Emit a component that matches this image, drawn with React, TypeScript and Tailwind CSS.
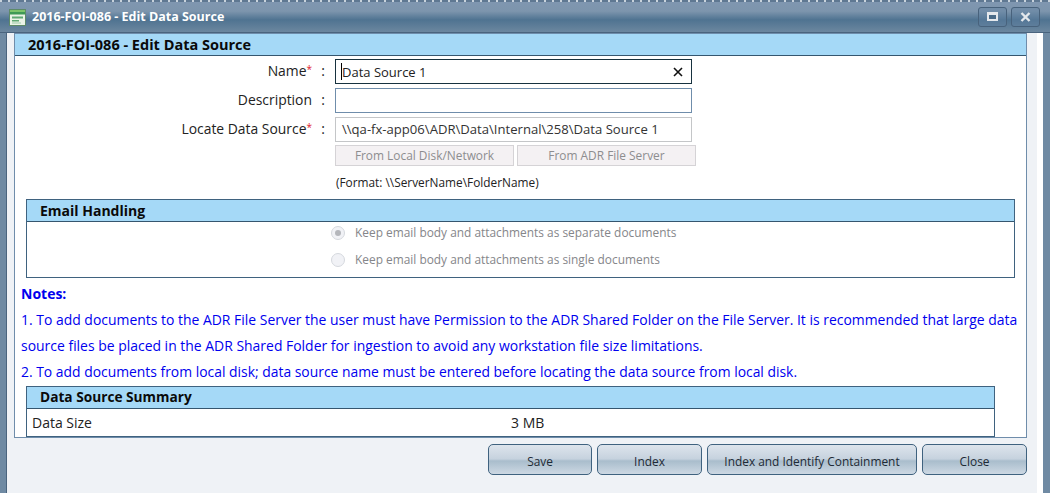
import * as React from 'react';

const font = { fontFamily: '"Open Sans", "Noto Sans", sans-serif' };

const sectionHeader = 'h-[22px] bg-[#a5d9f7] border-b border-[#35566f] pl-[13px] flex items-center font-bold text-[#0a0a0a]';

const footerButtons = [
    { name: 'Save', width: 'w-[104px]' },
    { name: 'Index', width: 'w-[105px]' },
    { name: 'Index and Identify Containment', width: 'w-[210px]' },
    { name: 'Close', width: 'w-[105px]' },
];

const WindowIcon = () => (
    <svg width="17" height="17" viewBox="0 0 17 17" className="shrink-0">
        <rect x="0.5" y="0.5" width="16" height="16" fill="#eaf3e6" stroke="#5d8a68" />
        <rect x="1" y="1" width="15" height="2" fill="#7cc46a" />
        <rect x="1" y="3" width="15" height="2.5" fill="#3f9a55" />
        <rect x="3" y="7.5" width="11" height="2" fill="#5fa873" />
        <rect x="3" y="11" width="7" height="1.5" fill="#5fa873" />
        <rect x="3" y="13.5" width="9" height="1" fill="#9cc9a8" />
    </svg>
);

const FormRow = ({ label, required, children }: { label: string; required?: boolean; children: React.ReactNode }) => (
    <div className="flex items-start">
        <div className="w-[297px] flex justify-end text-[13.9px] leading-[24px] text-[#222]">
            {label}
            {required ? <span className="text-[#e0202a] text-[10px] leading-[20px]">*</span> : null}
        </div>
        <div className="w-[13px] text-right text-[14px] leading-[24px] text-[#222]">:</div>
        <div className="ml-[10px]">{children}</div>
    </div>
);

const Radio = ({ checked, label }: { checked?: boolean; label: string }) => (
    <div className="flex items-center h-[28px] pb-[6px] pl-[304px]">
        <span className="w-[14px] h-[14px] rounded-full border border-[#d5d8de] bg-[#f1f2f6] flex items-center justify-center">
            {checked ? <span className="w-[6px] h-[6px] rounded-full bg-[#b4b6bb]" /> : null}
        </span>
        <span className="ml-[10px] text-[11.9px] text-[#85868a]">{label}</span>
    </div>
);

export default function App() {
    return (
        <div style={font} className="w-[1050px] h-[493px] overflow-hidden flex flex-col bg-[#6f8aa3]">
            <div className="h-[33px] shrink-0 flex flex-col bg-[linear-gradient(#8097b1,#7d95ad_35%,#4f7391_62%,#6c879f)] border-b border-[#4a647e]">
                <div className="h-[2px] bg-[repeating-linear-gradient(90deg,#c9d3dc_0,#c9d3dc_2px,#5f7892_2px,#5f7892_8px)]" />
                <div className="flex-1 flex items-center pl-[9px] pr-[10px]">
                    <WindowIcon />
                    <span className="ml-[6px] text-[12.5px] font-bold text-white">2016-FOI-086 - Edit Data Source</span>
                    <div className="ml-auto flex gap-[4px] -mt-[1px]">
                        <div className="w-[29px] h-[20px] rounded-[3px] border border-[#48627c] bg-[#5f80a0]/40 flex items-center justify-center">
                            <span className="w-[11px] h-[9px] border-[2px] border-t-[3px] border-[#e4e8ec] bg-[#4a6b88]" />
                        </div>
                        <div className="w-[29px] h-[20px] rounded-[3px] border border-[#48627c] bg-[#5f80a0]/40 flex items-center justify-center text-[#e4e8ec]">
                            <svg width="11" height="10" viewBox="0 0 11 10">
                                <path d="M1.5 1 L9.5 9 M9.5 1 L1.5 9" stroke="currentColor" strokeWidth="2.4" />
                            </svg>
                        </div>
                    </div>
                </div>
            </div>

            <div className="flex-1 flex pl-[6px] pr-[7px] min-h-0">
                <div className="flex-1 bg-[#eff2f6] border-l border-[#4a647e] pl-[7px] pr-[10px] flex flex-col border-r-[6px] border-r-white">
                    <div className="h-[405px] border border-[#6f8dab] bg-white flex flex-col">
                        <div className={`${sectionHeader} text-[14.5px]`}>2016-FOI-086 - Edit Data Source</div>

                        <div className="pt-[3px] flex flex-col gap-[4px]">
                            <FormRow label="Name" required>
                                <div className="w-[357px] h-[25px] border border-[#17323f] flex items-center pl-[5px] pr-[9px] pt-[2px] text-[13px] text-[#222]">
                                    <span className="w-px h-[17px] bg-black -mt-[2px]" />
                                    <span>Data Source 1</span>
                                    <svg width="10" height="10" viewBox="0 0 10 10" className="ml-auto -mt-[2px] -mr-[1px]">
                                        <path d="M1 1 L9 9 M9 1 L1 9" stroke="#111" strokeWidth="1.6" />
                                    </svg>
                                </div>
                            </FormRow>
                            <FormRow label="Description">
                                <div className="w-[357px] h-[25px] border border-[#6f8dab]" />
                            </FormRow>
                            <FormRow label="Locate Data Source" required>
                                <div className="w-[357px] h-[25px] border border-[#c4c6c8] flex items-center pl-[6px] text-[13.1px] text-[#333]">
                                    \\qa-fx-app06\ADR\Data\Internal\258\Data Source 1
                                </div>
                            </FormRow>
                        </div>
                        <div className="pl-[320px] pt-[3px] flex gap-[3px]">
                            <div className="w-[179px] h-[21px] border border-[#d5d3d6] bg-[#f4f1f3] flex items-center justify-center text-[11.9px] text-[#8d8d8f]">From Local Disk/Network</div>
                            <div className="w-[179px] h-[21px] border border-[#d5d3d6] bg-[#f4f1f3] flex items-center justify-center text-[11.9px] text-[#8d8d8f]">From ADR File Server</div>
                        </div>
                        <div className="pl-[321px] pt-[8px] h-[33px] text-[11.85px] leading-[17px] text-[#222]">(Format: \\ServerName\FolderName)</div>

                        <div className="ml-[11px] w-[989px] h-[79px] border border-[#3f627f] flex flex-col">
                            <div className={`${sectionHeader} text-[14px]`}>Email Handling</div>
                            <Radio checked label="Keep email body and attachments as separate documents" />
                            <Radio label="Keep email body and attachments as single documents" />
                        </div>

                        <div className="pl-[6px] pt-[3px] text-[14px] leading-[26px] text-[#0000ee]">
                            <p className="font-bold">Notes:</p>
                            <p className="text-[13.95px]">1. To add documents to the ADR File Server the user must have Permission to the ADR Shared Folder on the File Server. It is recommended that large data source files be placed in the ADR Shared Folder for ingestion to avoid any workstation file size limitations.</p>
                            <p className="text-[13.9px]">2. To add documents from local disk; data source name must be entered before locating the data source from local disk.</p>
                        </div>

                        <div className="ml-[11px] mt-[1px] w-[969px] flex-1 border border-[#3f627f] flex flex-col">
                            <div className={`${sectionHeader} text-[13.7px]`}>Data Source Summary</div>
                            <div className="flex-1 flex items-center pl-[5px] text-[14px] text-[#222]">
                                <span className="w-[479px]">Data Size</span>
                                <span>3 MB</span>
                            </div>
                        </div>
                    </div>

                    <div className="mt-[6px] flex justify-end gap-[5px]">
                        {footerButtons.map((button) => (
                            <div
                                key={button.name}
                                className={`${button.width} h-[31px] pt-[4px] rounded-[5px] border border-[#3f627f] bg-[linear-gradient(#dde4ec,#c6d2de_48%,#a9bdcc_55%,#cdd8e3)] flex items-center justify-center text-[11.9px] text-[#1d2a35]`}
                            >
                                {button.name}
                            </div>
                        ))}
                    </div>
                </div>
            </div>
        </div>
    );
}
